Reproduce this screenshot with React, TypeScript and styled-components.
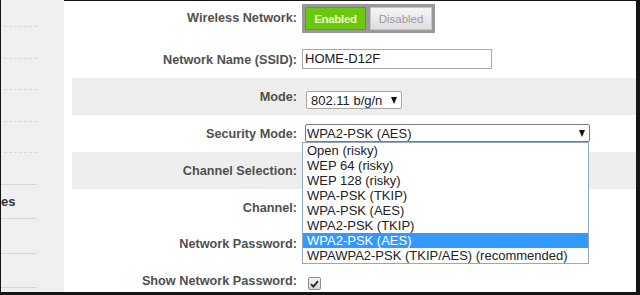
import React from "react";
import styled, { createGlobalStyle } from "styled-components";

const Global = createGlobalStyle`
  html, body { margin: 0; padding: 0; background: #fff; }
  body { font-family: "Liberation Sans", Arial, sans-serif; }
`;

const Frame = styled.div`
  width: 640px;
  height: 295px;
  box-sizing: border-box;
  border-style: solid;
  border-color: #151515;
  border-width: 0 4px 3px 1px;
  overflow: hidden;
  display: flex;
  background: #fff;
`;

const Sidebar = styled.nav`
  flex: 0 0 63px;
  background: #efefef;
  overflow: hidden;
  display: flex;
  flex-direction: column;
`;

const SideItem = styled.div<{ $h: number; $dashed?: boolean }>`
  box-sizing: border-box;
  height: ${(p) => p.$h}px;
  width: ${(p) => (p.$dashed ? 33 : 36)}px;
  margin-left: ${(p) => (p.$dashed ? 3 : 0)}px;
  border-bottom: 1px ${(p) => (p.$dashed ? "dashed #d9d9d9" : "solid #d6d6d6")};
  display: flex;
  align-items: center;
`;

const SideText = styled.span`
  font-weight: bold;
  font-size: 13px;
  color: #333;
`;

const Main = styled.main`
  flex: 1;
  border-top: 1px solid #151515;
  padding-left: 8px;
  display: flex;
  flex-direction: column;
`;

const Row = styled.div<{ $h: number; $shaded?: boolean }>`
  flex: 0 0 ${(p) => p.$h}px;
  display: flex;
  align-items: flex-start;
  background: ${(p) => (p.$shaded ? "#eeeeee" : "transparent")};
`;

const Label = styled.div<{ $top?: number }>`
  flex: 0 0 225px;
  text-align: right;
  padding-top: ${(p) => p.$top ?? 12}px;
  font-size: 12.7px;
  line-height: 15px;
  font-weight: bold;
  color: #505050;
  white-space: nowrap;
`;

const Cell = styled.div`
  padding-left: 5px;
  position: relative;
`;

const Toggle = styled.div`
  margin-top: 3px;
  display: inline-flex;
  gap: 4px;
  padding: 3px;
  background: #999;
`;

const ToggleBtn = styled.span<{ $on?: boolean }>`
  box-sizing: border-box;
  width: ${(p) => (p.$on ? 61 : 62)}px;
  height: 23px;
  display: flex;
  align-items: center;
  justify-content: center;
  font-size: 11.5px;
  font-weight: ${(p) => (p.$on ? "bold" : "normal")};
  letter-spacing: ${(p) => (p.$on ? "-0.3px" : "0")};
  color: ${(p) => (p.$on ? "#eefcc8" : "#9b9b9b")};
  background: ${(p) => (p.$on ? "#6cc80f" : "linear-gradient(#f5f5f5, #dedede)")};
  border: 1px solid ${(p) => (p.$on ? "#56a70a" : "#c6c6c6")};
`;

const TextInput = styled.div`
  margin-top: 8px;
  box-sizing: border-box;
  width: 190px;
  height: 20px;
  border: 1px solid #a9a9a9;
  padding: 0 2px;
  font-size: 13px;
  line-height: 18px;
  color: #1e1212;
  background: #fff;
`;

const Select = styled.div<{ $w: number; $top: number; $dx: number; $dark?: boolean }>`
  margin-top: ${(p) => p.$top}px;
  margin-left: ${(p) => p.$dx}px;
  box-sizing: border-box;
  width: ${(p) => p.$w}px;
  height: 18px;
  border: 1px solid ${(p) => (p.$dark ? "#7a7a7a" : "#a6a6a6")};
  border-radius: 2px;
  background: #fff;
  display: flex;
  align-items: center;
  justify-content: space-between;
  padding: 0 4px 0 ${(p) => (p.$dark ? 1 : 4)}px;
  font-size: 13px;
  color: #222;
  position: relative;
`;

const Arrow = styled.span`
  width: 0;
  height: 0;
  border-left: 3.5px solid transparent;
  border-right: 3.5px solid transparent;
  border-top: 7px solid #111;
  margin-top: 1px;
`;

const List = styled.ul`
  position: absolute;
  left: -4px;
  top: 17px;
  width: 287px;
  margin: 0;
  padding: 0;
  list-style: none;
  box-sizing: border-box;
  border: 1px solid #93a8c4;
  background: #fff;
  z-index: 2;
`;

const Option = styled.li<{ $sel?: boolean }>`
  height: 15px;
  line-height: 15px;
  padding-left: 4px;
  font-size: 13px;
  color: ${(p) => (p.$sel ? "#fff" : "#222")};
  background: ${(p) => (p.$sel ? "#3399ff" : "transparent")};
  white-space: nowrap;
`;

const Check = styled.span`
  margin-top: 14px;
  margin-left: 6px;
  box-sizing: border-box;
  width: 13px;
  height: 13px;
  display: flex;
  align-items: center;
  justify-content: center;
  border: 1px solid #8f8f8f;
  border-radius: 2px;
  background: linear-gradient(#f3f3f3, #d4d4d4);
`;

const options = [
  "Open (risky)",
  "WEP 64 (risky)",
  "WEP 128 (risky)",
  "WPA-PSK (TKIP)",
  "WPA-PSK (AES)",
  "WPA2-PSK (TKIP)",
  "WPA2-PSK (AES)",
  "WPAWPA2-PSK (TKIP/AES) (recommended)",
];

export default function App() {
  return (
    <>
      <Global />
      <Frame>
        <Sidebar>
          <SideItem $h={27} $dashed />
          <SideItem $h={32} $dashed />
          <SideItem $h={31} $dashed />
          <SideItem $h={32} $dashed />
          <SideItem $h={31} $dashed />
          <SideItem $h={32} />
          <SideItem $h={34}>
            <SideText>es</SideText>
          </SideItem>
          <SideItem $h={35} />
          <SideItem $h={34} />
        </Sidebar>
        <Main>
          <Row $h={40}>
            <Label $top={10}>Wireless Network:</Label>
            <Cell>
              <Toggle>
                <ToggleBtn $on>Enabled</ToggleBtn>
                <ToggleBtn>Disabled</ToggleBtn>
              </Toggle>
            </Cell>
          </Row>
          <Row $h={37}>
            <Label>Network Name (SSID):</Label>
            <Cell>
              <TextInput>HOME-D12F</TextInput>
            </Cell>
          </Row>
          <Row $h={37} $shaded>
            <Label>Mode:</Label>
            <Cell>
              <Select $w={96} $top={13} $dx={4}>
                802.11 b/g/n
                <Arrow />
              </Select>
            </Cell>
          </Row>
          <Row $h={37}>
            <Label>Security Mode:</Label>
            <Cell>
              <Select $w={285} $top={9} $dx={3} $dark>
                WPA2-PSK (AES)
                <Arrow />
                <List>
                  {options.map((o) => (
                    <Option key={o} $sel={o === "WPA2-PSK (AES)"}>
                      {o}
                    </Option>
                  ))}
                </List>
              </Select>
            </Cell>
          </Row>
          <Row $h={37} $shaded>
            <Label>Channel Selection:</Label>
          </Row>
          <Row $h={37}>
            <Label>Channel:</Label>
          </Row>
          <Row $h={37}>
            <Label $top={11}>Network Password:</Label>
          </Row>
          <Row $h={37}>
            <Label $top={11}>Show Network Password:</Label>
            <Cell>
              <Check>
                <svg width="9" height="8" viewBox="0 0 9 8">
                  <path d="M1 4.2 L3.4 6.6 L8 1.2" fill="none" stroke="#222" strokeWidth="1.8" />
                </svg>
              </Check>
            </Cell>
          </Row>
        </Main>
      </Frame>
    </>
  );
}
